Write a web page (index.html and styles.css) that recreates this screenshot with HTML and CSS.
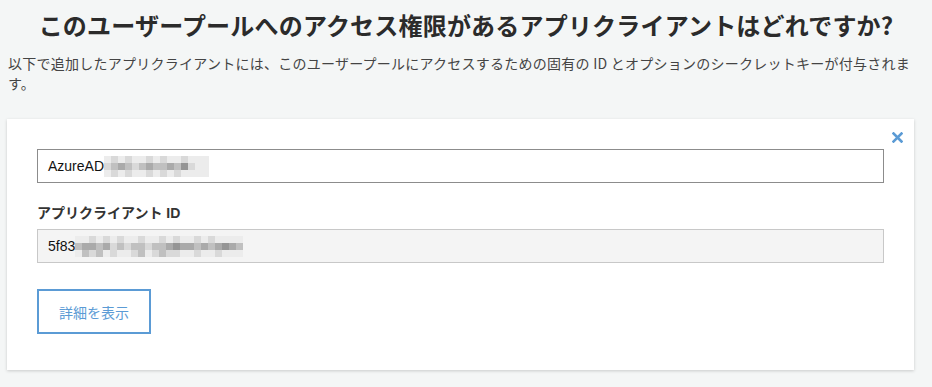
FILE: index.html
```html
<!DOCTYPE html>
<html lang="ja">
<head>
<meta charset="utf-8">
<link rel="stylesheet" href="styles.css">
</head>
<body>
<h1 class="title">このユーザープールへのアクセス権限があるアプリクライアントはどれですか?</h1>
<p class="desc">以下で追加したアプリクライアントには、このユーザープールにアクセスするための固有の ID とオプションのシークレットキーが付与されます。</p>
<div class="card">
  <button class="close" aria-label="close">
    <svg width="11" height="11" viewBox="0 0 11 11"><path d="M1.5 1.5 L9.5 9.5 M9.5 1.5 L1.5 9.5" stroke="#5b9bd5" stroke-width="2.6" stroke-linecap="square"/></svg>
  </button>
  <div class="field">
    <span class="val">AzureAD</span>
    <span class="mosaic m-name">
      <i class="a"></i><i class="b"></i><i class="a"></i><i class="b"></i><i class="a"></i><i class="a"></i><i class="b"></i><i class="a"></i><i class="b"></i><i class="a"></i><i class="a"></i><i class="b"></i><i class="a"></i><i class="a"></i><i class="a"></i>
      <i class="b"></i><i class="c"></i><i class="d"></i><i class="c"></i><i class="b"></i><i class="c"></i><i class="d"></i><i class="c"></i><i class="c"></i><i class="d"></i><i class="c"></i><i class="e"></i><i class="b"></i><i class="a"></i><i class="a"></i>
      <i class="a"></i><i class="b"></i><i class="a"></i><i class="b"></i><i class="a"></i><i class="a"></i><i class="b"></i><i class="a"></i><i class="b"></i><i class="a"></i><i class="b"></i><i class="a"></i><i class="a"></i><i class="a"></i><i class="a"></i>
    </span>
  </div>
  <div class="label">アプリクライアント ID</div>
  <div class="field readonly">
    <span class="val">5f83</span>
    <span class="mosaic m-id">
      <i class="a"></i><i class="a"></i><i class="b"></i><i class="a"></i><i class="b"></i><i class="a"></i><i class="b"></i><i class="a"></i><i class="a"></i><i class="b"></i><i class="a"></i><i class="a"></i><i class="b"></i><i class="a"></i><i class="b"></i><i class="a"></i><i class="a"></i><i class="b"></i><i class="a"></i><i class="b"></i><i class="a"></i><i class="a"></i><i class="a"></i><i class="a"></i>
      <i class="c"></i><i class="d"></i><i class="d"></i><i class="c"></i><i class="d"></i><i class="b"></i><i class="c"></i><i class="b"></i><i class="c"></i><i class="c"></i><i class="b"></i><i class="c"></i><i class="c"></i><i class="d"></i><i class="e"></i><i class="d"></i><i class="d"></i><i class="c"></i><i class="d"></i><i class="c"></i><i class="d"></i><i class="e"></i><i class="d"></i><i class="c"></i>
      <i class="a"></i><i class="c"></i><i class="b"></i><i class="c"></i><i class="a"></i><i class="b"></i><i class="a"></i><i class="a"></i><i class="b"></i><i class="c"></i><i class="a"></i><i class="b"></i><i class="c"></i><i class="b"></i><i class="b"></i><i class="a"></i><i class="a"></i><i class="b"></i><i class="a"></i><i class="a"></i><i class="b"></i><i class="a"></i><i class="a"></i><i class="a"></i>
    </span>
  </div>
  <button class="btn">詳細を表示</button>
</div>
</body>
</html>
```
FILE: styles.css
```css
html, body {
  margin: 0;
  padding: 0;
}
body {
  background: #f4f6f6;
  font-family: "Liberation Sans", "Noto Sans CJK JP", sans-serif;
  color: #333;
  width: 932px;
  height: 387px;
  overflow: hidden;
}
.title {
  margin: 9px 0 0;
  text-align: center;
  font-family: "Noto Sans CJK JP", sans-serif;
  font-size: 24px;
  line-height: 32px;
  font-weight: 700;
  color: #2b2b2b;
  letter-spacing: 0.2px;
}
.desc {
  margin: 12px 0 0;
  padding: 0 16px 0 8px;
  font-family: "Noto Sans CJK JP", sans-serif;
  font-size: 14px;
  line-height: 20px;
  color: #444;
  letter-spacing: 0.25px;
}
.card {
  position: relative;
  margin: 26px 0 0 7px;
  width: 847px;
  padding: 30px 30px 36px;
  background: #fff;
  box-shadow: 0 1px 3px rgba(0,0,0,0.18);
  display: flex;
  flex-direction: column;
  align-items: flex-start;
}
.close {
  position: absolute;
  top: 13px;
  right: 11px;
  padding: 0;
  margin: 0;
  border: 0;
  background: none;
  width: 11px;
  height: 11px;
  display: flex;
}
.field {
  box-sizing: border-box;
  width: 847px;
  height: 34px;
  border: 1px solid #8c8c8c;
  background: #fff;
  display: flex;
  align-items: center;
  padding-left: 10px;
  font-size: 14px;
  color: #111;
}
.field.readonly {
  background: #f4f4f4;
  border-color: #c8c8c8;
}
.val {
  line-height: 16px;
}
.mosaic {
  display: grid;
  grid-template-rows: 7px 7px 7px;
  height: 21px;
  flex: none;
}
.m-name {
  grid-template-columns: repeat(15, 7px);
}
.m-id {
  grid-template-columns: repeat(24, 7px);
}
.mosaic i { display: block; }
.mosaic .a { background: #ececec; }
.mosaic .b { background: #d9d9d9; }
.mosaic .c { background: #c0c0c0; }
.mosaic .d { background: #aaaaaa; }
.mosaic .e { background: #959595; }
.label {
  margin-top: 20px;
  font-size: 14px;
  line-height: 20px;
  font-weight: 700;
  color: #333;
}
.label + .field { margin-top: 6px; }
.btn {
  margin-top: 26px;
  box-sizing: border-box;
  width: 114px;
  height: 45px;
  border: 2px solid #5b9bd5;
  background: #fff;
  color: #5b9bd5;
  font-family: "Noto Sans CJK JP", sans-serif;
  font-size: 14px;
  padding: 0;
}
```
